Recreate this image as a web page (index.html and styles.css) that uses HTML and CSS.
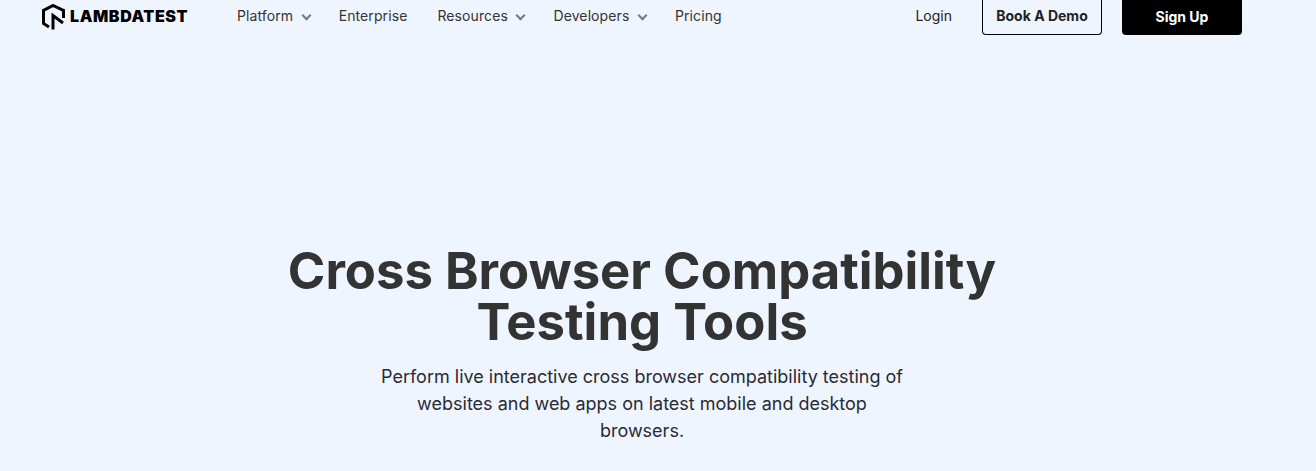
FILE: index.html
```html
<!DOCTYPE html>
<html lang="en">
<head>
  <meta charset="UTF-8" />
  <title>Cross Browser Compatibility Testing Tools</title>
  <link rel="stylesheet" href="styles.css">
</head>
<body>

  <header class="topbar">
    <a class="logo" href="#">
      <svg class="logo-mark" width="24" height="26" viewBox="0 0 24 26" fill="none" stroke="#000" stroke-width="3">
        <path d="M21.5 14 V6.5 L11 1.5 L1.5 6.5 V19.5 L7 23" />
        <path d="M11 25.5 V11.5 L21 19" />
      </svg>
      <span>LAMBDATEST</span>
    </a>

    <nav class="menu">
      <a href="#" class="has-caret">Platform</a>
      <a href="#">Enterprise</a>
      <a href="#" class="has-caret">Resources</a>
      <a href="#" class="has-caret">Developers</a>
      <a href="#">Pricing</a>
    </nav>

    <div class="actions">
      <a href="#" class="login">Login</a>
      <a href="#" class="btn btn-outline">Book A Demo</a>
      <a href="#" class="btn btn-dark">Sign Up</a>
    </div>
  </header>

  <main class="hero">
    <h1>Cross Browser Compatibility Testing Tools</h1>
    <p>Perform live interactive cross browser compatibility testing of websites and web apps on latest mobile and desktop browsers.</p>
  </main>

</body>
</html>
```

FILE: styles.css
```css
* {
  margin: 0;
  padding: 0;
  box-sizing: border-box;
  font-family: Inter, 'Liberation Sans', sans-serif;
}

html, body {
  height: 100%;
  overflow: hidden;
}

body {
  background-color: #eff5ff;
  color: #333;
}

a {
  text-decoration: none;
  color: inherit;
}

.topbar {
  display: flex;
  align-items: center;
  height: 35px;
  padding: 0 74px 0 42px;
  font-size: 14px;
}

.logo {
  display: flex;
  align-items: center;
  gap: 4px;
  width: 195px;
  margin-bottom: 4px;
  color: #000;
  font-size: 16px;
  font-weight: 900;
  letter-spacing: 0.6px;
}

.logo-mark {
  flex-shrink: 0;
  margin-top: 2px;
}

.menu {
  display: flex;
  gap: 30px;
  margin-bottom: 4px;
  color: #333;
  letter-spacing: 0.1px;
}

.has-caret::after {
  content: "";
  display: inline-block;
  width: 5px;
  height: 5px;
  margin-left: 8.5px;
  border-right: 2px solid #777;
  border-bottom: 2px solid #777;
  transform: translate(1px, -2px) rotate(45deg);
}

.actions {
  display: flex;
  align-items: center;
  margin-left: auto;
}

.login {
  margin-right: 30px;
  margin-bottom: 4px;
  color: #222;
}

.btn {
  display: flex;
  align-items: center;
  justify-content: center;
  width: 120px;
  height: 35px;
  padding-bottom: 3px;
  border-radius: 0 0 4px 4px;
  font-size: 14px;
  font-weight: 700;
}

.btn-outline {
  border: 1px solid #000;
  border-top: none;
  color: #222;
  margin-right: 20px;
}

.btn-dark {
  background-color: #000;
  color: #fff;
}

.hero {
  width: 760px;
  margin: 0 auto;
  padding-top: 211px;
  transform: translateX(-16px);
  text-align: center;
}

.hero h1 {
  font-size: 50.8px;
  line-height: 50.5px;
  font-weight: 750;
  color: #333;
}

.hero p {
  width: 530px;
  margin: 16px auto 0;
  font-size: 18px;
  line-height: 27px;
  font-weight: 400;
  color: #2a2a33;
}
```
